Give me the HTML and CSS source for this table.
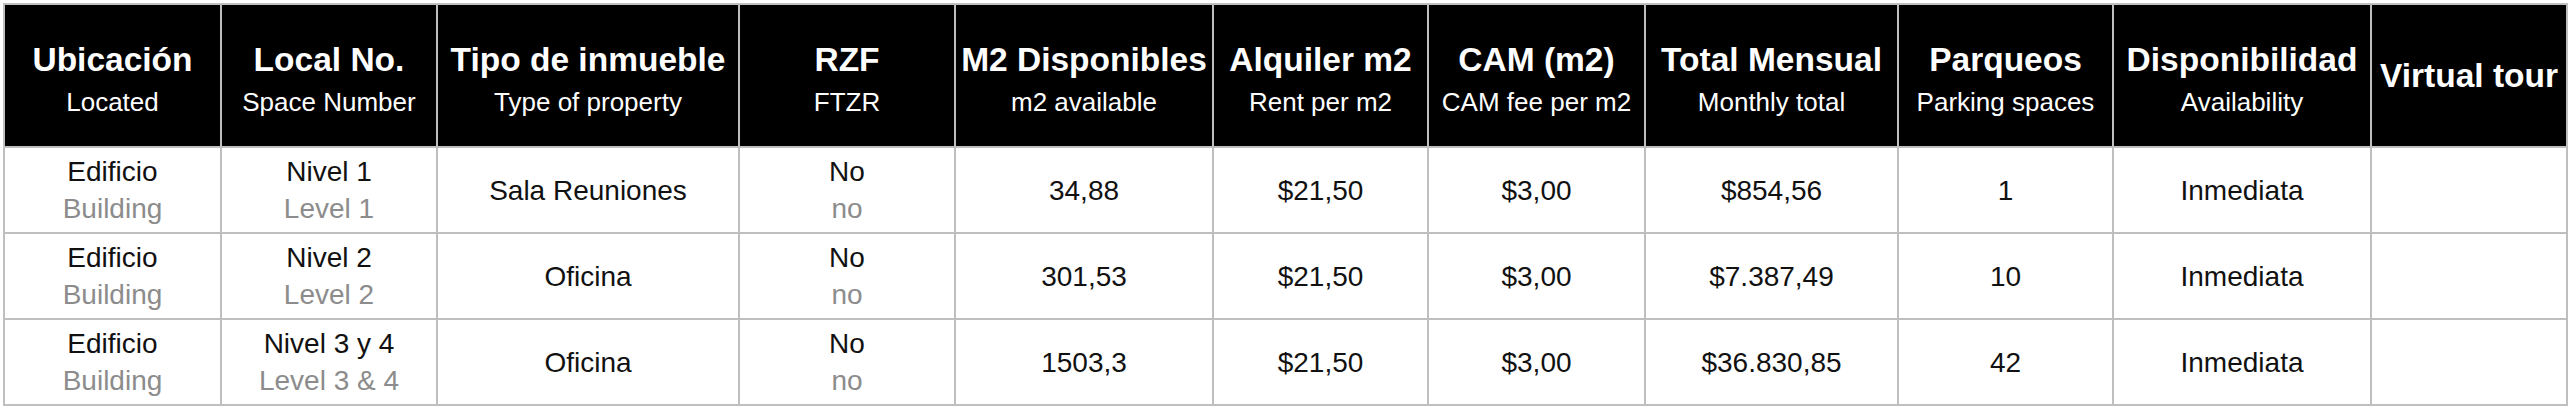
FILE: index.html
```html
<!DOCTYPE html>
<html lang="es">
<head>
<meta charset="utf-8">
<title>Disponibilidad</title>
<link rel="stylesheet" href="styles.css">
</head>
<body>
<table class="spaces">
  <colgroup>
    <col class="c-ubic"><col class="c-local"><col class="c-tipo"><col class="c-rzf"><col class="c-m2">
    <col class="c-alq"><col class="c-cam"><col class="c-total"><col class="c-parq"><col class="c-disp"><col class="c-tour">
  </colgroup>
  <thead>
    <tr class="head-row">
      <th><span class="t">Ubicación</span><span class="s">Located</span></th>
      <th><span class="t">Local No.</span><span class="s">Space Number</span></th>
      <th><span class="t">Tipo de inmueble</span><span class="s">Type of property</span></th>
      <th><span class="t">RZF</span><span class="s">FTZR</span></th>
      <th><span class="t">M2 Disponibles</span><span class="s">m2 available</span></th>
      <th><span class="t">Alquiler m2</span><span class="s">Rent per m2</span></th>
      <th><span class="t">CAM (m2)</span><span class="s">CAM fee per m2</span></th>
      <th><span class="t">Total Mensual</span><span class="s">Monthly total</span></th>
      <th><span class="t">Parqueos</span><span class="s">Parking spaces</span></th>
      <th><span class="t">Disponibilidad</span><span class="s">Availability</span></th>
      <th class="single"><span class="t">Virtual tour</span></th>
    </tr>
  </thead>
  <tbody>
    <tr>
      <td><span class="m">Edificio</span><span class="g">Building</span></td>
      <td><span class="m">Nivel 1</span><span class="g">Level 1</span></td>
      <td>Sala Reuniones</td>
      <td><span class="m">No</span><span class="g">no</span></td>
      <td>34,88</td>
      <td>$21,50</td>
      <td>$3,00</td>
      <td>$854,56</td>
      <td>1</td>
      <td>Inmediata</td>
      <td></td>
    </tr>
    <tr>
      <td><span class="m">Edificio</span><span class="g">Building</span></td>
      <td><span class="m">Nivel 2</span><span class="g">Level 2</span></td>
      <td>Oficina</td>
      <td><span class="m">No</span><span class="g">no</span></td>
      <td>301,53</td>
      <td>$21,50</td>
      <td>$3,00</td>
      <td>$7.387,49</td>
      <td>10</td>
      <td>Inmediata</td>
      <td></td>
    </tr>
    <tr>
      <td><span class="m">Edificio</span><span class="g">Building</span></td>
      <td><span class="m">Nivel 3 y 4</span><span class="g">Level 3 &amp; 4</span></td>
      <td>Oficina</td>
      <td><span class="m">No</span><span class="g">no</span></td>
      <td>1503,3</td>
      <td>$21,50</td>
      <td>$3,00</td>
      <td>$36.830,85</td>
      <td>42</td>
      <td>Inmediata</td>
      <td></td>
    </tr>
  </tbody>
</table>
</body>
</html>
```

FILE: styles.css
```css
html, body {
  margin: 0;
  padding: 0;
  background: #ffffff;
}

body {
  padding: 3px 0 0 3px;
  font-family: "Liberation Sans", Arial, Helvetica, sans-serif;
  color: #111111;
}

.spaces {
  border-collapse: collapse;
  table-layout: fixed;
  width: 2565px;
  border: 2px solid #bfbfbf;
}

.c-ubic { width: 217px; }
.c-local { width: 216px; }
.c-tipo { width: 302px; }
.c-rzf { width: 216px; }
.c-m2 { width: 258px; }
.c-alq { width: 215px; }
.c-cam { width: 217px; }
.c-total { width: 253px; }
.c-parq { width: 215px; }
.c-disp { width: 258px; }
.c-tour { width: 196px; }

.spaces th,
.spaces td {
  border: 2px solid #bfbfbf;
  text-align: center;
  padding: 0;
}

.head-row {
  height: 143px;
}

.head-row th {
  background: #000000;
  color: #ffffff;
  vertical-align: top;
  padding-top: 33px;
  white-space: nowrap;
}

.head-row th.single {
  vertical-align: middle;
  padding-top: 0;
}

.t {
  display: block;
  font-size: 33.5px;
  font-weight: 700;
  line-height: 44px;
}

.s {
  display: block;
  font-size: 26px;
  font-weight: 400;
  line-height: 41px;
}

.spaces tbody tr {
  height: 86px;
}

.spaces td {
  vertical-align: middle;
  font-size: 28px;
  line-height: 37px;
  color: #111111;
}

.m {
  display: block;
}

.g {
  display: block;
  color: #8c8c8c;
}
```
